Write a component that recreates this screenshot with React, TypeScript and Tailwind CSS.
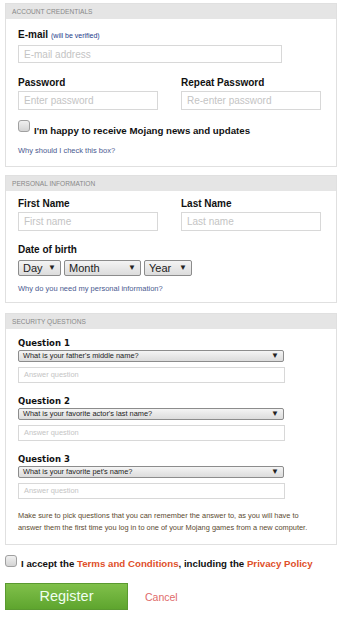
import React from "react";

function Panel({ title, children }: { title: string; children: React.ReactNode }) {
  return (
    <div className="ml-[5px] mr-px border border-[#e0e0e0] bg-white">
      <div className="flex h-[15px] items-center bg-[#e5e5e5] pl-[6px] text-[6.6px] uppercase text-[#888]">
        {title}
      </div>
      <div className="px-[12px]">{children}</div>
    </div>
  );
}

function Input({ placeholder, className }: { placeholder: string; className: string }) {
  return (
    <div
      className={`flex items-center border border-[#d8d8d8] bg-white pl-[5px] text-[#c4c4c4] ${className}`}
    >
      {placeholder}
    </div>
  );
}

function Select({ label, className }: { label: string; className: string }) {
  return (
    <div
      className={`flex items-center justify-between rounded-[2px] border border-[#8c8c8c] bg-gradient-to-b from-[#f4f4f4] to-[#dcdcdc] px-[4px] text-[#222] ${className}`}
    >
      <span>{label}</span>
      <span className="text-[8px]">▼</span>
    </div>
  );
}

function Checkbox() {
  return (
    <div className="h-[12px] w-[12px] shrink-0 rounded-[3px] border border-[#a0a0a0] bg-gradient-to-b from-[#f0f0f0] to-[#d4d4d4]" />
  );
}

function Question({ n, q, first }: { n: number; q: string; first?: boolean }) {
  return (
    <div className={first ? "mt-[8px]" : "mt-[12px]"}>
      <div
        className="text-[8.5px] font-bold leading-[12px] text-[#111]"
        style={{ fontFamily: '"DejaVu Sans", sans-serif' }}
      >
        Question {n}
      </div>
      <Select label={q} className="mt-px h-[12px] w-[266px] text-[7.4px]" />
      <Input placeholder="Answer question" className="mt-[5px] h-[16px] w-[267px] text-[7.4px]" />
    </div>
  );
}

const label = "text-[10px] font-bold leading-[12px] text-[#111]";

export default function App() {
  return (
    <div className="min-h-[627px] bg-white pt-[3px]" style={{ fontFamily: '"Liberation Sans", Arial, sans-serif' }}>
      <Panel title="Account credentials">
        <div className={`mt-[10px] flex items-baseline gap-[3px] ${label}`}>
          E-mail <span className="text-[7px] font-normal text-[#1a3a8a]">(will be verified)</span>
        </div>
        <Input placeholder="E-mail address" className="mt-[3px] h-[18px] w-[264px] text-[10px]" />
        <div className="mt-[14px] grid grid-cols-[140px_140px] gap-x-[23px]">
          <div className={label}>Password</div>
          <div className={label}>Repeat Password</div>
          <Input placeholder="Enter password" className="mt-[2px] h-[19px] text-[10px]" />
          <Input placeholder="Re-enter password" className="mt-[2px] h-[19px] text-[10px]" />
        </div>
        <div className="mt-[10px] flex items-start gap-[4px]">
          <Checkbox />
          <span className="mt-[5px] text-[9.7px] font-bold leading-[12px] text-[#111]">
            I'm happy to receive Mojang news and updates
          </span>
        </div>
        <div className="mt-[9px] pb-[11px] text-[7.5px] leading-[9px] text-[#4a5a90]">Why should I check this box?</div>
      </Panel>

      <div className="h-[8px]" />

      <Panel title="Personal information">
        <div className="mt-[7px] grid grid-cols-[140px_140px] gap-x-[23px]">
          <div className={label}>First Name</div>
          <div className={label}>Last Name</div>
          <Input placeholder="First name" className="mt-[2px] h-[19px] text-[10px]" />
          <Input placeholder="Last name" className="mt-[2px] h-[19px] text-[10px]" />
        </div>
        <div className={`mt-[13px] ${label}`}>Date of birth</div>
        <div className="mt-[4px] flex gap-[3px]">
          <Select label="Day" className="h-[16px] w-[43px] text-[11px]" />
          <Select label="Month" className="h-[16px] w-[77px] text-[11px]" />
          <Select label="Year" className="h-[16px] w-[48px] text-[11px]" />
        </div>
        <div className="mt-[8px] pb-[9px] text-[7.5px] leading-[9px] text-[#4a5a90]">
          Why do you need my personal information?
        </div>
      </Panel>

      <div className="h-[10px]" />

      <Panel title="Security questions">
        <Question n={1} q="What is your father's middle name?" first />
        <Question n={2} q="What is your favorite actor's last name?" />
        <Question n={3} q="What is your favorite pet's name?" />
        <p className="mt-[11px] pb-[10px] text-[7.4px] leading-[12px] text-[#5b4a30]">
          Make sure to pick questions that you can remember the answer to, as you will have to answer them the first
          time you log in to one of your Mojang games from a new computer.
        </p>
      </Panel>

      <div className="ml-[5px] mt-[10px] flex items-start gap-[4px]">
        <Checkbox />
        <span className="mt-[3px] text-[9.7px] font-bold leading-[12px] text-[#111]">
          I accept the <span className="text-[#e0502a]">Terms and Conditions</span>, including the{" "}
          <span className="text-[#e0502a]">Privacy Policy</span>
        </span>
      </div>

      <div className="ml-[5px] mt-[13px] flex items-center gap-[17px]">
        <div className="flex h-[27px] w-[123px] items-center justify-center border border-[#5a9a30] bg-gradient-to-b from-[#80c04a] to-[#5ea52e] text-[14.5px] text-[#f0fff0]">
          Register
        </div>
        <span className="mt-[2px] text-[10.5px] text-[#e06a6a]">Cancel</span>
      </div>
    </div>
  );
}
